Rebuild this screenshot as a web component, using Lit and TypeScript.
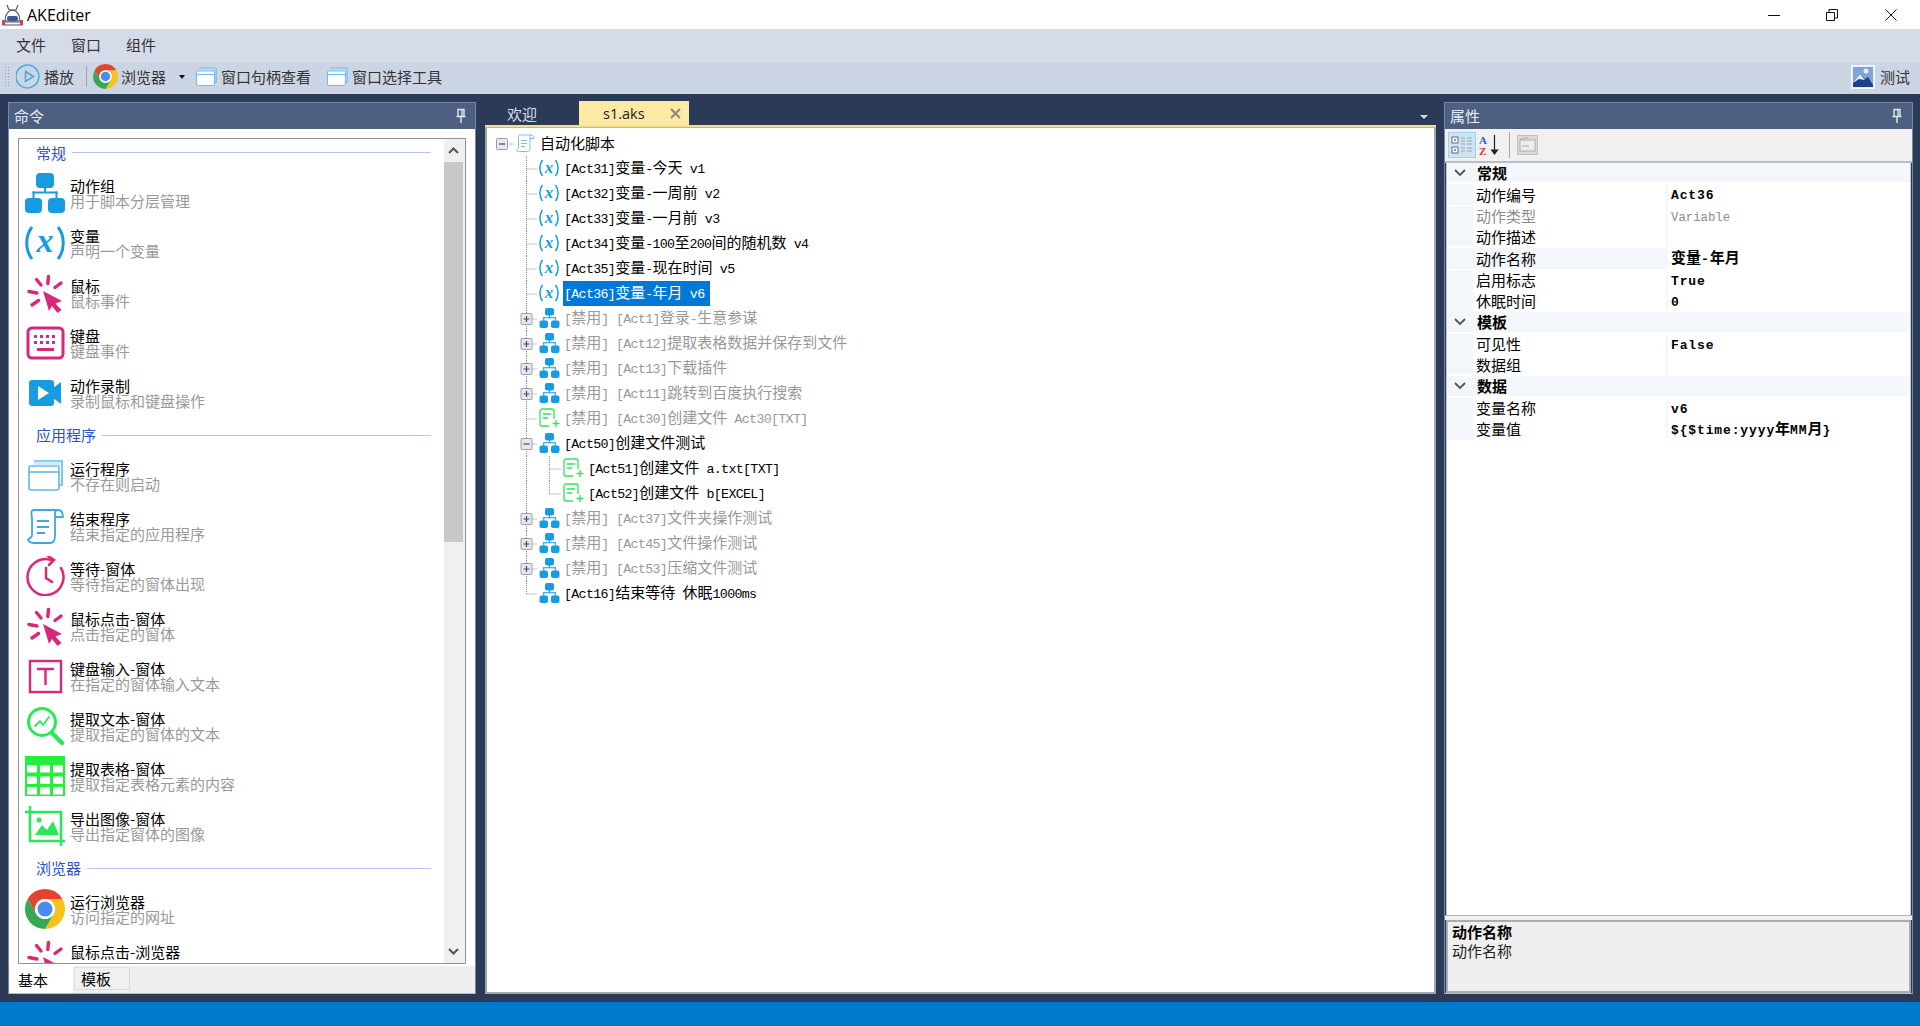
import { LitElement, html, css, svg } from "lit";
import { customElement } from "lit/decorators.js";

const BLUE = "#189be0";
const PINK = "#d9277c";
const GREEN = "#2be85a";
const LBLUE = "#62b6ea";

const mix = (s: string, cls = "l") =>
  html`<span>${s.split(/([\u0000-\u00ff]+)/).filter(Boolean).map((p) =>
    /^[\u0000-\u00ff]+$/.test(p) ? html`<span class=${cls}>${p}</span>` : p
  )}</span>`;

const ic = (w: number, h: number, vb: string, body: unknown) =>
  html`<svg class="ic" width=${w} height=${h} viewBox=${vb} aria-hidden="true">${body}</svg>`;

const groupIcon = (s = 40, h = 40) =>
  ic(s, h, "0 0 40 40", svg`<g fill=${BLUE}>
    <rect x="11" y="0" width="18" height="15" rx="4"/><rect x="0" y="25" width="17" height="15" rx="4"/><rect x="23" y="25" width="17" height="15" rx="4"/>
    <rect x="19" y="14" width="2" height="6"/><rect x="7.5" y="18.5" width="25" height="2"/><rect x="7.5" y="18.5" width="2" height="8"/><rect x="30.5" y="18.5" width="2" height="8"/></g>`);

const varIcon = (w = 40, h = 36) =>
  ic(w, h, "0 0 40 36", svg`<g fill="none" stroke=${BLUE} stroke-width="3">
    <path d="M7 2 C0 11 0 25 7 34"/><path d="M33 2 C40 11 40 25 33 34"/></g>
    <text x="20" y="27" text-anchor="middle" font-family="Liberation Serif" font-style="italic" font-weight="700" font-size="34" fill=${BLUE}>x</text>`);

const clickIcon = () =>
  ic(40, 40, "0 0 40 40", svg`<g stroke=${PINK} stroke-width="3.4" stroke-linecap="round" fill="none">
    <path d="M23.5 3.5 22.8 10.5"/><path d="M11.5 6.5 16 12"/><path d="M36 10 30 14.5"/><path d="M4 18.5 12 20"/><path d="M7 32 13.5 27.5"/></g>
    <path d="M18 18 37 28 30.5 30.5 36.5 37 32.5 40 27 33 24 38Z" fill=${PINK}/>`);

const keyboardIcon = () =>
  ic(40, 40, "0 0 40 40", svg`<rect x="3" y="5" width="35" height="30" rx="4" fill="none" stroke=${PINK} stroke-width="3"/>
    <g fill=${PINK}><rect x="9" y="12" width="3" height="3"/><rect x="15" y="12" width="3" height="3"/><rect x="21" y="12" width="3" height="3"/><rect x="27" y="12" width="3" height="3"/>
    <rect x="9" y="18" width="3" height="3"/><rect x="15" y="18" width="3" height="3"/><rect x="21" y="18" width="3" height="3"/><rect x="27" y="18" width="3" height="3"/><rect x="12" y="25" width="17" height="3"/></g>`);

const videoIcon = () =>
  ic(40, 40, "0 0 40 40", svg`<rect x="4" y="7" width="25" height="26" rx="3" fill=${BLUE}/><path d="M28 15 36 9V31L28 25Z" fill=${BLUE}/><path d="M13 13 24 20 13 27Z" fill="#fff"/>`);

const windowIcon = (w = 40, h = 40) =>
  ic(w, h, "0 0 40 40", svg`<g fill="none" stroke=${LBLUE} stroke-width="1.6">
    <path d="M9 5H37V29H33"/><rect x="4" y="10" width="30" height="24" rx="2" fill="#fff"/><path d="M4 16H34"/></g>
    <path d="M9 5H37V10H9Z" fill="#a8d6f3" opacity=".5"/>`);

const scrollIcon = (s = 40) =>
  ic(s, s, "0 0 40 40", svg`<g fill="none" stroke=${s < 30 ? "#6fb8e6" : "#3ba7e4"} stroke-width="1.8" stroke-linejoin="round">
    <path d="M9 4H33C37 4 38 8 38 11H30"/><path d="M9 4C6 4 6 7 7 12V30L3 34C5 37 7 37 9 37H25C29 37 30 34 30 30V7C30 6 31 4 33 4"/>
    <path d="M12 15H24M12 21H24M12 27H20"/></g>`);

const clockIcon = () =>
  ic(40, 40, "0 0 40 40", svg`<g fill="none" stroke=${PINK} stroke-width="2.5" stroke-linecap="round">
    <path d="M26 4A18 18 0 1 0 36 12"/><path d="M21 12V22L27 26"/><path d="M23 0 29 4 24 9"/></g>`);

const textIcon = () =>
  ic(40, 40, "0 0 40 40", svg`<rect x="5" y="5" width="31" height="31" fill="none" stroke=${PINK} stroke-width="2.4"/><path d="M12 13H29M20.500 13V29" fill="none" stroke=${PINK} stroke-width="2.4"/>`);

const searchIcon = () =>
  ic(40, 40, "0 0 40 40", svg`<g fill="none" stroke=${GREEN} stroke-width="3" stroke-linecap="round"><circle cx="17" cy="16" r="13.500"/><path d="M27 27 37 37" stroke-width="4.500"/>
    <path d="M10 20 15 15 18 19 24 11" stroke-width="1.800"/></g>`);

const tableIcon = () =>
  ic(40, 40, "0 0 40 40", svg`<rect width="40" height="40" fill="#22f03c"/>
    <g fill="#fff">${[9, 20.5, 31].flatMap((y) => [2, 15, 28].map((x) => svg`<rect x=${x} y=${y} width="10" height="7.500"/>`))}</g>`);

const imageIcon = () =>
  ic(40, 40, "0 0 40 40", svg`<g fill="none" stroke=${GREEN} stroke-width="2.600"><path d="M0 6H36V40"/><path d="M5 0V35H40"/></g>
    <path d="M11 30 18 20 23 25 29 16 35 30Z" fill=${GREEN} transform="translate(-1 -1)"/><circle cx="14" cy="14" r="2.500" fill=${GREEN}/>`);

const chromeIcon = (s = 40) =>
  ic(s, s, "0 0 40 40", svg`<path d="M20 0A20 20 0 0 1 37.300 10L20 10A10 10 0 0 0 11.300 25L2.700 10A20 20 0 0 1 20 0Z" fill="#e5432f"/>
    <path d="M37.300 10A20 20 0 0 1 20 40L28.700 25A10 10 0 0 0 20 10Z" fill="#f8c21c"/>
    <path d="M2.700 10A20 20 0 0 0 20 40L28.700 25A10 10 0 0 1 11.300 25Z" fill="#37a853"/>
    <circle cx="20" cy="20" r="10" fill="#fff"/><circle cx="20" cy="20" r="7.500" fill="#4b8bf0"/>`);

const fileIcon = () =>
  ic(24, 20, "0 0 24 20", svg`<g fill="none" stroke=${GREEN} stroke-width="1.300"><path d="M12 18H5C4 18 3 17 3 16V3C3 2 4 1 5 1H15C16 1 17 2 17 3V11"/><path d="M6 6H14M6 10H11M19 12V19M15.500 15.500H22.500"/></g>`);

const pin = () =>
  ic(12, 16, "0 0 12 16", svg`<path d="M3 1.500H9V8.500H3ZM7 2V8.500M1.500 8.500H10.500M6 9V15" fill="none" stroke="#e4e8f0" stroke-width="1.400"/>`);

type Cmd = { t: string; s: string; i: () => unknown } | { sec: string; first?: boolean };
const COMMANDS: Cmd[] = [
  { sec: "常规", first: true },
  { t: "动作组", s: "用于脚本分层管理", i: () => groupIcon() },
  { t: "变量", s: "声明一个变量", i: () => varIcon() },
  { t: "鼠标", s: "鼠标事件", i: clickIcon },
  { t: "键盘", s: "键盘事件", i: keyboardIcon },
  { t: "动作录制", s: "录制鼠标和键盘操作", i: videoIcon },
  { sec: "应用程序" },
  { t: "运行程序", s: "不存在则启动", i: () => windowIcon() },
  { t: "结束程序", s: "结束指定的应用程序", i: () => scrollIcon() },
  { t: "等待-窗体", s: "等待指定的窗体出现", i: clockIcon },
  { t: "鼠标点击-窗体", s: "点击指定的窗体", i: clickIcon },
  { t: "键盘输入-窗体", s: "在指定的窗体输入文本", i: textIcon },
  { t: "提取文本-窗体", s: "提取指定的窗体的文本", i: searchIcon },
  { t: "提取表格-窗体", s: "提取指定表格元素的内容", i: tableIcon },
  { t: "导出图像-窗体", s: "导出指定窗体的图像", i: imageIcon },
  { sec: "浏览器" },
  { t: "运行浏览器", s: "访问指定的网址", i: () => chromeIcon() },
  { t: "鼠标点击-浏览器", s: "\u00a0", i: clickIcon },
];

type Node = { text: string; icon: "var" | "group" | "file"; level: number; box?: "+" | "-"; dis?: boolean; sel?: boolean; last?: boolean };
const TREE: Node[] = [
  { text: "[Act31]变量-今天 v1", icon: "var", level: 1 },
  { text: "[Act32]变量-一周前 v2", icon: "var", level: 1 },
  { text: "[Act33]变量-一月前 v3", icon: "var", level: 1 },
  { text: "[Act34]变量-100至200间的随机数 v4", icon: "var", level: 1 },
  { text: "[Act35]变量-现在时间 v5", icon: "var", level: 1 },
  { text: "[Act36]变量-年月 v6", icon: "var", level: 1, sel: true },
  { text: "[禁用] [Act1]登录-生意参谋", icon: "group", level: 1, box: "+", dis: true },
  { text: "[禁用] [Act12]提取表格数据并保存到文件", icon: "group", level: 1, box: "+", dis: true },
  { text: "[禁用] [Act13]下载插件", icon: "group", level: 1, box: "+", dis: true },
  { text: "[禁用] [Act11]跳转到百度执行搜索", icon: "group", level: 1, box: "+", dis: true },
  { text: "[禁用] [Act30]创建文件 Act30[TXT]", icon: "file", level: 1, dis: true },
  { text: "[Act50]创建文件测试", icon: "group", level: 1, box: "-" },
  { text: "[Act51]创建文件 a.txt[TXT]", icon: "file", level: 2 },
  { text: "[Act52]创建文件 b[EXCEL]", icon: "file", level: 2, last: true },
  { text: "[禁用] [Act37]文件夹操作测试", icon: "group", level: 1, box: "+", dis: true },
  { text: "[禁用] [Act45]文件操作测试", icon: "group", level: 1, box: "+", dis: true },
  { text: "[禁用] [Act53]压缩文件测试", icon: "group", level: 1, box: "+", dis: true },
  { text: "[Act16]结束等待 休眠1000ms", icon: "group", level: 1, last: true },
];

const dot = (d: string) => svg`<path d=${d} fill="none" stroke="#8a8a8a" stroke-dasharray="1 1"/>`;
const box = (cx: number, sign: "+" | "-") => svg`
  <rect x=${cx - 5.5} y="7.500" width="11" height="11" rx="1" fill="#e6e8ee" stroke="#9c9ea4"/>
  <path d=${sign === "+" ? `M${cx - 3} 13H${cx + 3}M${cx} 10V16` : `M${cx - 3} 13H${cx + 3}`} stroke="#3c4a6e" stroke-width="1.200" fill="none"/>`;

const gutter = (n: Node) => {
  const w = n.level === 1 ? 50 : 74;
  const parts: unknown[] = [];
  if (n.level === 1) {
    parts.push(dot(`M39.500 0V${n.last ? 13 : 25}`));
    parts.push(dot("M39.500 13H50"));
    if (n.box) parts.push(box(39.5, n.box));
  } else {
    parts.push(dot("M39.500 0V25"));
    parts.push(dot(`M62.500 0V${n.last ? 13 : 25}`));
    parts.push(dot("M62.500 13H74"));
  }
  return html`<svg class="gut" width=${w} height="25" aria-hidden="true">${parts}</svg>`;
};

const Props = [
  { g: "常规" },
  { n: "动作编号", v: "Act36" },
  { n: "动作类型", v: "Variable", ro: true },
  { n: "动作描述", v: "" },
  { n: "动作名称", v: "变量-年月", sel: true },
  { n: "启用标志", v: "True" },
  { n: "休眠时间", v: "0" },
  { g: "模板" },
  { n: "可见性", v: "False" },
  { n: "数据组", v: "" },
  { g: "数据" },
  { n: "变量名称", v: "v6" },
  { n: "变量值", v: "${$time:yyyy年MM月}" },
] as { g?: string; n?: string; v?: string; ro?: boolean; sel?: boolean }[];

@customElement("app-root")
export class AppRoot extends LitElement {
  static styles = css`
    :host { display: block; width: 1920px; height: 1026px; overflow: hidden; font-family: "Noto Sans CJK SC", "Liberation Sans", sans-serif; font-size: 15px; line-height: 18px; color: #000; }
    .app { display: flex; flex-direction: column; height: 1026px; }
    svg { display: block; flex: none; }
    .l { font-family: "Liberation Mono", monospace; font-size: 13.300px; letter-spacing: -.67px; }
    .titlebar { height: 29px; display: flex; align-items: center; background: #fff; flex: none; }
    .logo { margin-left: 2px; }
    .apptitle { font-family: "Open Sans", sans-serif; font-size: 16px; margin-left: 4px; }
    .winbtns { margin-left: auto; display: flex; }
    .winbtn { width: 58.500px; height: 29px; display: flex; align-items: center; justify-content: center; }
    .menu { height: 32px; flex: none; background: #d6dbe9; display: flex; align-items: center; padding-left: 16px; gap: 25px; color: #333; }
    .toolbar { height: 33px; flex: none; background: #ccd5e4; border-top: 1px solid #dce1ec; box-sizing: border-box; display: flex; align-items: center; color: #333; padding-bottom: 3px; }
    .grip { width: 6px; height: 22px; margin-left: 4px; background-image: radial-gradient(#98a1b3 0.8px, transparent 0.9px); background-size: 3px 3px; }
    .tb { display: flex; align-items: center; gap: 3px; }
    .tsep { width: 1px; height: 21px; background: #9aa3b5; margin: 0 6px 0 12px; }
    .caret { width: 0; height: 0; border: 3.500px solid transparent; border-top: 4px solid #111; border-bottom: 0; margin: 1px 9px 0 13px; }
    .main { flex: 1; background: #2a3a57; padding: 6px 7px 8px 8px; display: flex; gap: 8px; min-height: 0; }
    .status { height: 24px; flex: none; background: #007acc; }
    .panel { width: 468px; flex: none; margin-top: 2px; display: flex; flex-direction: column; border: 1px solid #7687a6; box-sizing: border-box; border-bottom-color: #b8bcc4; }
    .phead { height: 26px; flex: none; background: #4d6082; color: #e8ecf4; display: flex; align-items: center; justify-content: space-between; padding: 0 8px 0 5px; }
    .cmdbody { flex: 1; background: #fff; display: flex; flex-direction: column; min-height: 0; padding: 9px 9px 0; }
    .list { flex: 1; min-height: 0; display: flex; border: 1.500px solid #8f939a; overflow: hidden; }
    .items { flex: 1; overflow: hidden; padding-left: 6px; }
    .sec { height: 33px; padding-top: 1px; box-sizing: border-box; display: flex; align-items: center; gap: 6px; color: #2a52c4; padding-left: 11px; width: 406px; }
    .sec.first { height: 29px; padding-top: 0; padding-bottom: 2px; }
    .sec i { flex: 1; height: 1px; background: #b6c6e4; }
    .item { height: 50px; display: flex; align-items: center; gap: 5px; }
    .itxt { display: flex; flex-direction: column; line-height: 15px; }
    .itxt b { font-weight: 400; color: #000; }
    .itxt small { font-size: 15px; color: #999; }
    .sbar { width: 21px; flex: none; background: #f0f0f0; display: flex; flex-direction: column; align-items: flex-start; }
    .sarrow { width: 19px; height: 23px; display: flex; align-items: center; justify-content: center; }
    .thumb { width: 19px; height: 380px; background: #c8c8c8; }
    .sgap { flex: 1; }
    .ltabs { height: 29px; flex: none; background: #efefef; display: flex; border-top: 2px solid #fff; box-sizing: border-box; }
    .ltab { box-sizing: border-box; display: flex; align-items: center; }
    .ltab.on { width: 63px; margin-left: 1px; background: #fff; padding-left: 8px; }
    .ltab.off { width: 56px; height: 23px; padding-left: 6px; margin-top: 1px; border: 1px solid #dcdcdc; border-top-color: #e4e4e4; margin-left: 1px; background: #f0f0f0; }
    .center { width: 951px; flex: none; margin-left: 1px; display: flex; flex-direction: column; min-height: 0; }
    .dtabs { height: 25px; flex: none; display: flex; align-items: flex-end; }
    .dt1 { width: 94px; height: 24px; color: #d7dee9; display: flex; align-items: center; padding: 1px 0 0 22px; box-sizing: border-box; }
    .dt2 { width: 110px; height: 24px; background: #fbe9a4; display: flex; align-items: center; gap: 25px; padding: 1px 0 0 24px; box-sizing: border-box; color: #222; font-family: "Open Sans", sans-serif; font-size: 14.500px; }
    .dcaret { margin-left: auto; margin-right: 8px; margin-bottom: 6px; width: 0; height: 0; border: 4.500px solid transparent; border-top: 4.500px solid #d6dce8; border-bottom: 0; }
    .dline { height: 2px; flex: none; background: #f3df8c; }
    .doc { flex: 1; background: #fff; border: 2px solid #a2a5ab; border-top: 1px solid #b8b8b0; min-height: 0; padding-top: 2.500px; }
    .row { height: 25px; display: flex; align-items: center; }
    .row.root .txt { margin-left: 2px; padding: 0 3px; }
    .icwrap { flex: none; display: flex; align-items: center; justify-content: center; width: 24px; height: 25px; }
    .txt { margin-left: 2px; padding: 0 6px 0 1px; height: 25px; display: flex; align-items: center; white-space: pre; }
    .txt.dis { color: #989898; }
    .txt.sel { background: #0078d7; color: #fff; }
    .props { width: 469px; }
    .props .phead { padding-right: 9px; }
    .ptool { height: 32px; flex: none; background: #f0f0f0; display: flex; align-items: center; padding-left: 3px; border-bottom: 2px solid #b9bcc1; }
    .pbtn { width: 28px; height: 26px; background: #cde4f7; border: 1px solid #a5cfec; box-sizing: border-box; display: flex; align-items: center; justify-content: center; }
    .psep { width: 1px; height: 26px; background: #a8a8a8; margin: 0 7px 0 8px; }
    .pgrid { flex: 1; background: #fff; min-height: 0; display: flex; flex-direction: column; gap: 2px; margin: 0 1px; border-left: 1px solid #c4c7cc; border-right: 1px solid #c4c7cc; }
    .pg { height: 19.340px; flex: none; background: #f3f6fb; display: flex; align-items: center; font-weight: 700; }
    .pg svg { margin-left: 7px; margin-right: 11px; }
    .pr { height: 19.340px; flex: none; display: grid; grid-template-columns: 26px 193px 1fr; background: #f3f6fb; }
    .pr span.c { display: flex; align-items: center; background: #fff; padding-left: 3px; white-space: pre; }
    .pr .gut2 { background: #f3f6fb; }
    .pr .nm.sel { background: #f3f6fb; }
    .pr .nm.ro { color: #8c8c8c; }
    .pr .vl { margin-left: 2px; font-weight: 700; }
    .pr .vl.ro { color: #8c8c8c; font-weight: 400; }
    .lb { font-family: "Liberation Mono", monospace; font-size: 13px; letter-spacing: .87px; font-weight: 700; }
    .lr { font-family: "Liberation Mono", monospace; font-size: 12.300px; font-weight: 400; }
    .endgrid { flex: 1; background: #fff; }
    .split { height: 5px; flex: none; background: #f0f0f0; border-top: 1px solid #b4b4b4; box-sizing: border-box; }
    .pdesc { height: 73px; flex: none; background: #efefef; border: 2px solid #a9acb1; box-sizing: border-box; padding: 0 4px; line-height: 19px; margin: 0 1px; color: #222; }
    .pdesc b { display: block; color: #000; }
  `;

  private renderCmd(c: Cmd) {
    if ("sec" in c)
      return html`<div class="sec ${c.first ? "first" : ""}"><span>${c.sec}</span><i></i></div>`;
    return html`<div class="item">${c.i()}<div class="itxt"><b>${c.t}</b><small>${c.s}</small></div></div>`;
  }

  private treeIcon(n: Node) {
    if (n.icon === "var") return varIcon(20, 18);
    if (n.icon === "group") return groupIcon(21, 20);
    return fileIcon();
  }

  render() {
    return html`<div class="app">
      <div class="titlebar">
        <span class="logo">${ic(21, 24, "0 0 21 24", svg`<g fill="none" stroke="#4a5568" stroke-width="1.100"><path d="M5 2 7 7M16 2 14 7M7 7H14"/><path d="M3 18C3 11 7 7 10.500 7S18 11 18 18Z"/><path d="M1 19H20V22H1Z"/></g><rect x="5" y="13" width="11" height="5" rx="2" fill="#3d5a94"/><rect x="0" y="17" width="3" height="5" fill="#c8475a"/><rect x="18" y="17" width="3" height="5" fill="#c8475a"/>`)}</span>
        <span class="apptitle">AKEditer</span>
        <div class="winbtns">
          <span class="winbtn">${ic(12, 12, "0 0 12 12", svg`<path d="M0 6.500H12" stroke="#111" fill="none"/>`)}</span>
          <span class="winbtn">${ic(12, 12, "0 0 12 12", svg`<path d="M.5 3.500H8.500V11.500H.5ZM3 3V.5H11.500V9H9" stroke="#111" fill="none"/>`)}</span>
          <span class="winbtn">${ic(12, 12, "0 0 12 12", svg`<path d="M.5 .5 11.500 11.500M11.500 .5 .5 11.500" stroke="#111" fill="none"/>`)}</span>
        </div>
      </div>
      <div class="menu"><span>文件</span><span>窗口</span><span>组件</span></div>
      <div class="toolbar">
        <div class="grip"></div>
        <div class="tb" style="margin-left:6px">${ic(25, 25, "0 0 25 25", svg`<path d="M12.500 1A11.500 11.500 0 1 1 5 22" fill="none" stroke="#45a9e4" stroke-width="1.500"/><path d="M5 22A11.500 11.500 0 0 1 12.500 1" fill="none" stroke="#45a9e4" stroke-width="1.500" stroke-dasharray="30 3"/><path d="M9.500 7.500 17.500 12.500 9.500 17.500Z" fill="none" stroke="#45a9e4" stroke-width="1.500"/>`)}<span>播放</span></div>
        <div class="tsep"></div>
        <div class="tb">${chromeIcon(25)}<span>浏览器</span></div>
        <div class="caret"></div>
        <div class="tb">${windowIcon(24, 24)}<span>窗口句柄查看</span></div>
        <div class="tb" style="margin-left:14px">${windowIcon(24, 24)}<span>窗口选择工具</span></div>
        <div class="tb" style="margin-left:auto;margin-right:10px">${ic(24, 24, "0 0 24 24", svg`<rect x=".5" y=".5" width="23" height="23" fill="#e6eefa" stroke="#f4f6fb"/><rect x="2" y="2" width="20" height="20" fill="#7ea4d8"/><path d="M2 18 9 9 14 14 17 12 22 20V22H2Z" fill="#1d3f8c"/><circle cx="15" cy="6" r="2.500" fill="#e6eefa"/><path d="M2 18 9 9 14 15 8 14Z" fill="#dfe9f7"/>`)}<span style="margin-left:2px">测试</span></div>
      </div>
      <div class="main">
        <section class="panel">
          <div class="phead"><span>命令</span>${pin()}</div>
          <div class="cmdbody">
            <div class="list">
              <div class="items">${COMMANDS.map((c) => this.renderCmd(c))}</div>
              <div class="sbar">
                <div class="sarrow">${ic(11, 7, "0 0 11 7", svg`<path d="M1 6 5.500 1.500 10 6" fill="none" stroke="#555" stroke-width="2"/>`)}</div>
                <div class="thumb"></div>
                <div class="sgap"></div>
                <div class="sarrow">${ic(11, 7, "0 0 11 7", svg`<path d="M1 1 5.500 5.500 10 1" fill="none" stroke="#555" stroke-width="2"/>`)}</div>
              </div>
            </div>
          </div>
          <div class="ltabs"><div class="ltab on">基本</div><div class="ltab off">模板</div></div>
        </section>
        <section class="center">
          <div class="dtabs">
            <div class="dt1">欢迎</div>
            <div class="dt2"><span>s1.aks</span>${ic(11, 11, "0 0 11 11", svg`<path d="M1 1 10 10M10 1 1 10" stroke="#8c8a78" stroke-width="2" fill="none"/>`)}</div>
            <div class="dcaret"></div>
          </div>
          <div class="dline"></div>
          <div class="doc">
            <div class="row root">
              <svg class="gut" width="28" height="25" aria-hidden="true">${dot("M20 13H28")}${box(15, "-")}</svg>
              <span>${scrollIcon(20)}</span>
              <span class="txt">自动化脚本</span>
            </div>
            ${TREE.map(
              (n) => html`<div class="row">${gutter(n)}<span class="icwrap">${this.treeIcon(n)}</span>
                <span class="txt ${n.dis ? "dis" : ""} ${n.sel ? "sel" : ""}">${mix(n.text)}</span></div>`
            )}
          </div>
        </section>
        <section class="panel props">
          <div class="phead"><span>属性</span>${pin()}</div>
          <div class="ptool">
            <div class="pbtn">${ic(22, 20, "0 0 22 20", svg`<rect x="1" y="2" width="6" height="6" fill="#fff" stroke="#667"/><rect x="1" y="12" width="6" height="6" fill="#fff" stroke="#667"/><path d="M3 5H5M3 15H5" stroke="#223"/><path d="M10 3H14M10 6H14M10 13H14M10 16H14M16 3H21M16 6H21M16 9H21M16 13H21M16 16H21M10 9H14" stroke="#9aa0ac"/>`)}</div>
            <span style="margin-left:3px">${ic(22, 22, "0 0 22 22", svg`<text x="0" y="10" font-family="Liberation Serif" font-weight="700" font-size="11" fill="#2f62c8">A</text><text x="0" y="21" font-family="Liberation Serif" font-weight="700" font-size="11" fill="#c83b3b">Z</text><path d="M15.500 1V19M12.500 16 15.500 20 18.500 16Z" stroke="#222" stroke-width="1.200" fill="#222"/>`)}</span>
            <div class="psep"></div>
            ${ic(21, 20, "0 0 21 20", svg`<rect x=".5" y=".5" width="20" height="19" fill="#d9d9d9" stroke="#c0c0c0"/><rect x="3" y="5" width="15" height="11" fill="#ececec" stroke="#b0b0b0"/><path d="M5 11H12M3 5 7 3H11" stroke="#aaa" fill="none"/>`)}
          </div>
          <div class="pgrid">
            ${Props.map((p) =>
              p.g
                ? html`<div class="pg">${ic(12, 8, "0 0 12 8", svg`<path d="M1 1 6 6 11 1" fill="none" stroke="#555" stroke-width="1.800"/>`)}<span>${p.g}</span></div>`
                : html`<div class="pr"><span class="gut2"></span>
                    <span class="c nm ${p.ro ? "ro" : ""} ${p.sel ? "sel" : ""}">${p.n}</span>
                    <span class="c vl ${p.ro ? "ro" : ""}">${mix(p.v!, p.ro ? "lr" : "lb")}</span></div>`
            )}
            <div class="endgrid"></div>
          </div>
          <div class="split"></div>
          <div class="pdesc"><b>动作名称</b>动作名称</div>
        </section>
      </div>
      <div class="status"></div>
    </div>`;
  }
}
